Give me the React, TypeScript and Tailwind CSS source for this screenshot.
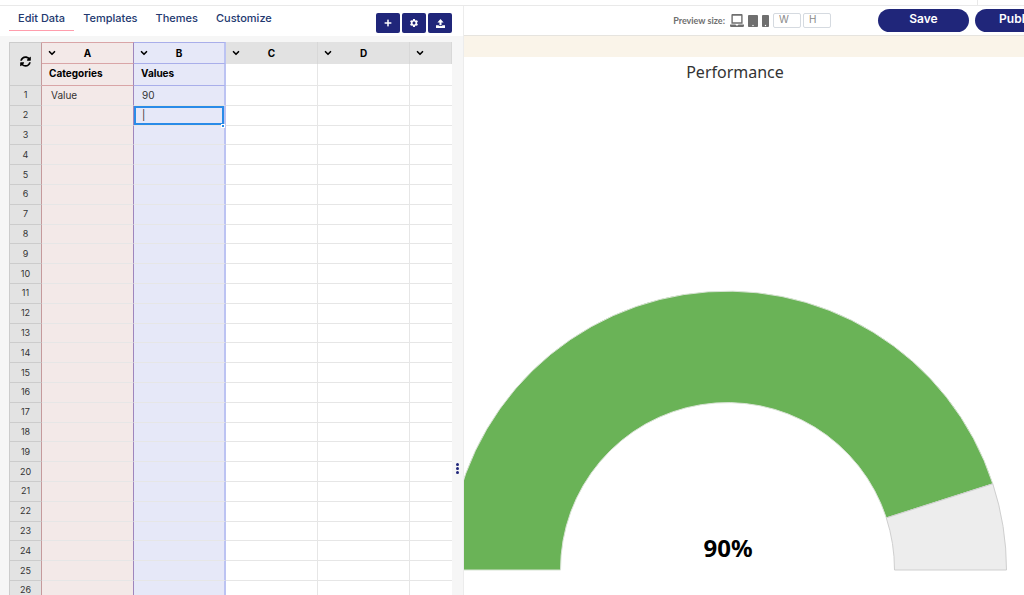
import { FaLaptop, FaMobile, FaPlus, FaSyncAlt, FaTablet } from 'react-icons/fa';
import { MdSettings } from 'react-icons/md';
import { ChevronDown } from 'lucide-react';

function UploadIcon({ className }: { className?: string }) {
  return (
    <svg className={className} viewBox="0 0 16 16" fill="currentColor" aria-hidden="true">
      <path d="M8 0 L13.5 6 H9.8 V11 H6.2 V6 H2.5 Z" />
      <path d="M0 11 H5 V12.5 H11 V11 H16 V16 H0 Z" />
    </svg>
  );
}

const tabs = ['Edit Data', 'Templates', 'Themes', 'Customize'];

const tools = [
  { label: 'Add', icon: FaPlus, size: 'h-2 w-2' },
  { label: 'Settings', icon: MdSettings, size: 'h-[10px] w-[10px]' },
  { label: 'Upload', icon: UploadIcon, size: 'h-[9px] w-[9px]' },
];

const devices = [
  { label: 'Laptop', icon: FaLaptop, size: 'w-[14px] h-[13px]' },
  { label: 'Tablet', icon: FaTablet, size: 'w-[10px] h-[12px]' },
  { label: 'Phone', icon: FaMobile, size: 'w-[7px] h-[12px]' },
];

const columns = [
  { name: 'A', title: 'Categories', cell: 'bg-[#f3e9e8] border-r border-r-[#9f86bd]', head: 'border-y border-y-[#d9a5a7]', line: 'border-b-[#d9a5a7]' },
  { name: 'B', title: 'Values', cell: 'bg-[#e6e8f8] border-r-2 border-r-[#bcc3f2]', head: 'border-y border-y-[#a9aeea]', line: 'border-b-[#a9aeea]' },
  { name: 'C', title: '', cell: 'bg-white border-r border-r-[#e6e6e6]', head: '', line: 'border-b-[#e6e6e6]' },
  { name: 'D', title: '', cell: 'bg-white border-r border-r-[#e6e6e6]', head: '', line: 'border-b-[#e6e6e6]' },
  { name: '', title: '', cell: 'bg-white', head: '', line: 'border-b-[#e6e6e6]' },
];

const rows = Array.from({ length: 26 }, (_, i) => i + 1);

function TopBar() {
  return (
    <div className="flex h-[6px] shrink-0 justify-end border-b border-[#e9e9e9] bg-white">
      <div className="w-[47px] border-l border-[#e9e9e9]" />
    </div>
  );
}

function Tabs() {
  return (
    <div className="flex h-[30px] shrink-0 items-start justify-between bg-white pl-[9px] pr-[11px]">
      <nav className="flex text-[11px] font-medium text-[#23396f]">
        {tabs.map((tab, index) => (
          <button
            key={tab}
            type="button"
            className={`h-[25px] border-b px-[9px] ${index === 0 ? 'border-[#ff9dac]' : 'border-transparent'}`}
          >
            {tab}
          </button>
        ))}
      </nav>
      <div className="flex gap-[2px] pt-[7px]">
        {tools.map(({ label, icon: Icon, size }) => (
          <button
            key={label}
            type="button"
            aria-label={label}
            className="flex h-[20px] w-[24px] items-center justify-center rounded-[2px] bg-[#20267a] text-white"
          >
            <Icon className={size} />
          </button>
        ))}
      </div>
    </div>
  );
}

function DataTable() {
  return (
    <table className="h-[559px] w-full table-fixed border-separate border-spacing-0 text-[10px] text-[#333]">
      <colgroup>
        <col className="w-[33px]" />
        <col className="w-[92px]" />
        <col className="w-[92px]" />
        <col className="w-[92px]" />
        <col className="w-[92px]" />
        <col />
      </colgroup>
      <thead className="text-black">
        <tr className="h-[22px]">
          <th rowSpan={2} className="border border-[#cccccc] border-r-[#c59a9c] bg-[#e3e3e3] px-0 pb-[6px] pt-0">
            <button type="button" aria-label="Refresh" className="flex w-full justify-center">
              <FaSyncAlt className="h-[11px] w-[11px]" />
            </button>
          </th>
          {columns.map((column, index) => (
            <th
              key={index}
              className={`p-0 ${index > 1 ? 'border-r border-r-[#d8d8d8] bg-[#e2e2e2]' : column.cell} ${column.head}`}
            >
              <div className="flex items-center">
                <button type="button" aria-label={`Column ${column.name} menu`} className="pl-[5px]">
                  <ChevronDown className="h-[10px] w-[10px]" strokeWidth={4} />
                </button>
                <span className="flex-1 pr-[15px] text-center font-bold">{column.name}</span>
              </div>
            </th>
          ))}
        </tr>
        <tr className="h-[22px]">
          {columns.map((column, index) => (
            <th
              key={index}
              className={`border-b pb-[2px] pl-[7px] pr-0 pt-0 text-left font-bold ${column.cell} ${column.line}`}
            >
              {column.title}
            </th>
          ))}
        </tr>
      </thead>
      <tbody>
        {rows.map((row) => (
          <tr key={row} className="h-[19px]">
            <th
              scope="row"
              className="border-x border-b border-[#cccccc] border-r-[#c59a9c] bg-[#e3e3e3] p-0 text-[9px] font-normal leading-3"
            >
              {row}
            </th>
            {columns.map((column, index) => {
              const editing = row === 2 && index === 1;
              return (
                <td
                  key={index}
                  className={`relative border-b border-b-[#e6e6e6] py-0 pr-0 leading-3 ${
                    index === 0 ? 'pl-[9px]' : 'pl-2'
                  } ${column.cell}`}
                >
                  {row === 1 && index === 0 && 'Value'}
                  {row === 1 && index === 1 && '90'}
                  {editing && (
                    <>
                      <input
                        aria-label="B2"
                        defaultValue="|"
                        className="absolute inset-0 w-full border-2 border-[#2a8be8] bg-[#e6e8f8] px-[6px] text-[10px] outline-none"
                      />
                      <span className="absolute -bottom-[3px] -right-[1px] z-10 h-1 w-1 border border-white bg-[#2a8be8]" />
                    </>
                  )}
                </td>
              );
            })}
          </tr>
        ))}
      </tbody>
    </table>
  );
}

function PreviewBar() {
  return (
    <div className="flex h-[30px] shrink-0 items-center overflow-hidden border-b border-[#e6e4df] bg-white">
      <div className="flex flex-1 items-center justify-end text-[#6f6f6f]">
        <label htmlFor="preview-width" className="mr-[5px] font-['Lato','Liberation_Sans',sans-serif] text-[9px] font-bold">
          Preview size:
        </label>
        {devices.map(({ label, icon: Icon, size }) => (
          <button key={label} type="button" aria-label={label} className="mr-1">
            <Icon className={size} preserveAspectRatio="none" />
          </button>
        ))}
        <input
          id="preview-width"
          placeholder="W"
          className="mr-[2px] h-[15px] w-[28px] rounded-[2px] border border-[#d5dae0] px-[5px] pb-[2px] text-[10px] placeholder:text-[#8a8a8a]"
        />
        <input
          aria-label="Height"
          placeholder="H"
          className="h-[15px] w-[28px] rounded-[2px] border border-[#d5dae0] px-[5px] pb-[2px] text-[10px] placeholder:text-[#8a8a8a]"
        />
      </div>
      <div className="-mr-[42px] ml-[47px] flex gap-[6px] text-[12px] font-semibold text-white">
        <button type="button" className="h-[23px] w-[91px] rounded-full bg-[#20267a] pb-[3px]">
          Save
        </button>
        <button type="button" className="h-[23px] w-[91px] rounded-full bg-[#20267a] pb-[3px]">
          Publish
        </button>
      </div>
    </div>
  );
}

function Gauge() {
  return (
    <svg className="block h-[538px] w-[560px] shrink-0" viewBox="464 57 560 538" role="img" aria-label="Performance 90%">
      <path
        d="M448.5 570 A279 279 0 0 1 992.8 483.8 L886.3 517.9 A167 167 0 0 0 560.5 570 Z"
        fill="#6ab357"
        stroke="#d8e3d4"
        strokeWidth="1"
      />
      <path
        d="M992.8 483.8 A279 279 0 0 1 1006.5 570 L894.5 570 A167 167 0 0 0 886.3 517.9 Z"
        fill="#ededed"
        stroke="#cfcfcf"
        strokeWidth="1"
      />
      <text x="735" y="78" textAnchor="middle" fontSize="16" fill="#333">
        Performance
      </text>
      <text x="728" y="557" textAnchor="middle" fontSize="24" fontWeight="700" fill="#000">
        90%
      </text>
    </svg>
  );
}

export default function App() {
  return (
    <div className="flex h-screen flex-col overflow-hidden bg-white font-['Inter','Liberation_Sans',sans-serif]">
      <TopBar />
      <div className="flex min-h-0 flex-1">
        {/* Data editor */}
        <section className="flex w-[464px] shrink-0 flex-col border-r border-[#ececec] bg-[#f6f6f6]">
          <Tabs />
          <div className="flex min-h-0 flex-1 overflow-hidden pl-[9px] pt-[6px]">
            <div className="min-w-0 flex-1">
              <DataTable />
            </div>
            <div className="flex w-[11px] items-center justify-center pt-[300px]" role="separator">
              <div className="flex flex-col gap-[1px]">
                <span className="h-[3px] w-[3px] rounded-full bg-[#20267a]" />
                <span className="h-[3px] w-[3px] rounded-full bg-[#20267a]" />
                <span className="h-[3px] w-[3px] rounded-full bg-[#20267a]" />
              </div>
            </div>
          </div>
        </section>

        {/* Chart preview */}
        <main className="flex min-w-0 flex-1 flex-col">
          <PreviewBar />
          <div className="h-[21px] shrink-0 bg-[#faf4e9]" />
          <div className="min-h-0 flex-1 overflow-hidden font-['Noto_Sans','Open_Sans',sans-serif]">
            <Gauge />
          </div>
        </main>
      </div>
    </div>
  );
}
